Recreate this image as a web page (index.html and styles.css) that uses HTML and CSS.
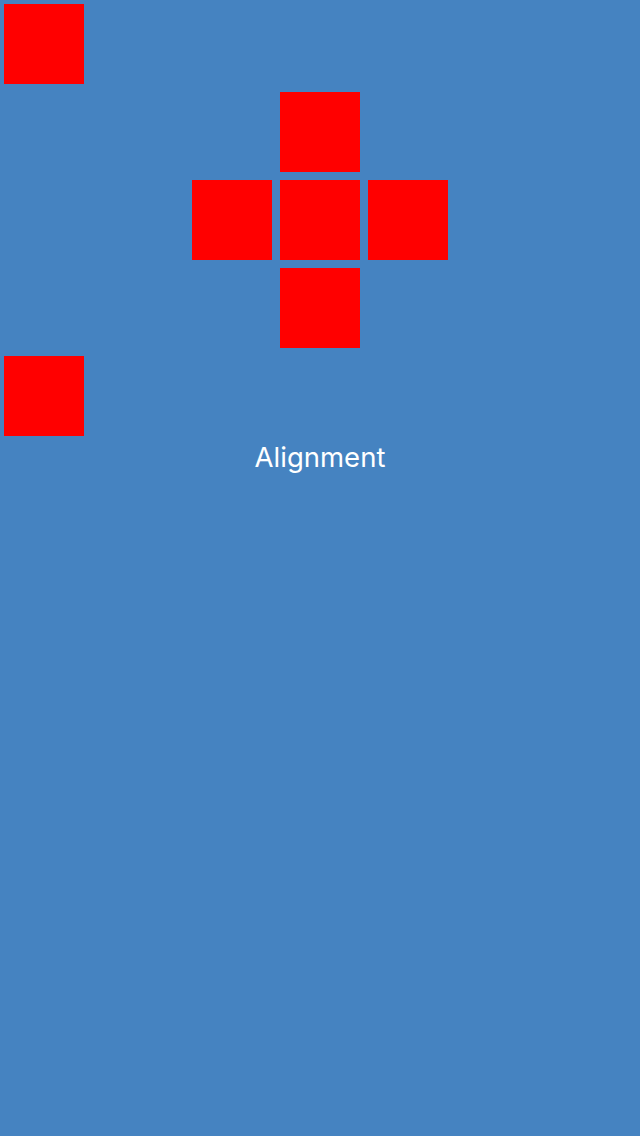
FILE: index.html
```html
<!DOCTYPE html>
<html>
<head>
<meta charset="utf-8">
<link rel="stylesheet" href="styles.css">
</head>
<body>
<div class="page">
  <div class="sq"></div>
  <div class="cross">
    <div class="sq c2"></div>
    <div class="sq c1"></div>
    <div class="sq c2"></div>
    <div class="sq c3"></div>
    <div class="sq c2"></div>
  </div>
  <div class="sq"></div>
  <div class="label">Alignment</div>
</div>
</body>
</html>
```
FILE: styles.css
```css
html, body {
  margin: 0;
  padding: 0;
  background: #4583c1;
  height: 100%;
}
.page {
  display: flex;
  flex-direction: column;
  align-items: flex-start;
  gap: 8px;
  padding: 4px;
}
.sq {
  width: 80px;
  height: 80px;
  background: #ff0000;
}
.cross {
  align-self: center;
  display: grid;
  grid-template-columns: 80px 80px 80px;
  gap: 8px;
}
.c1 { grid-column: 1; }
.c2 { grid-column: 2; }
.c3 { grid-column: 3; }
.label {
  align-self: stretch;
  text-align: center;
  color: #ffffff;
  font-family: Inter, "Noto Sans", sans-serif;
  font-size: 27.5px;
  line-height: 34px;
  margin-top: -4px;
}
```
